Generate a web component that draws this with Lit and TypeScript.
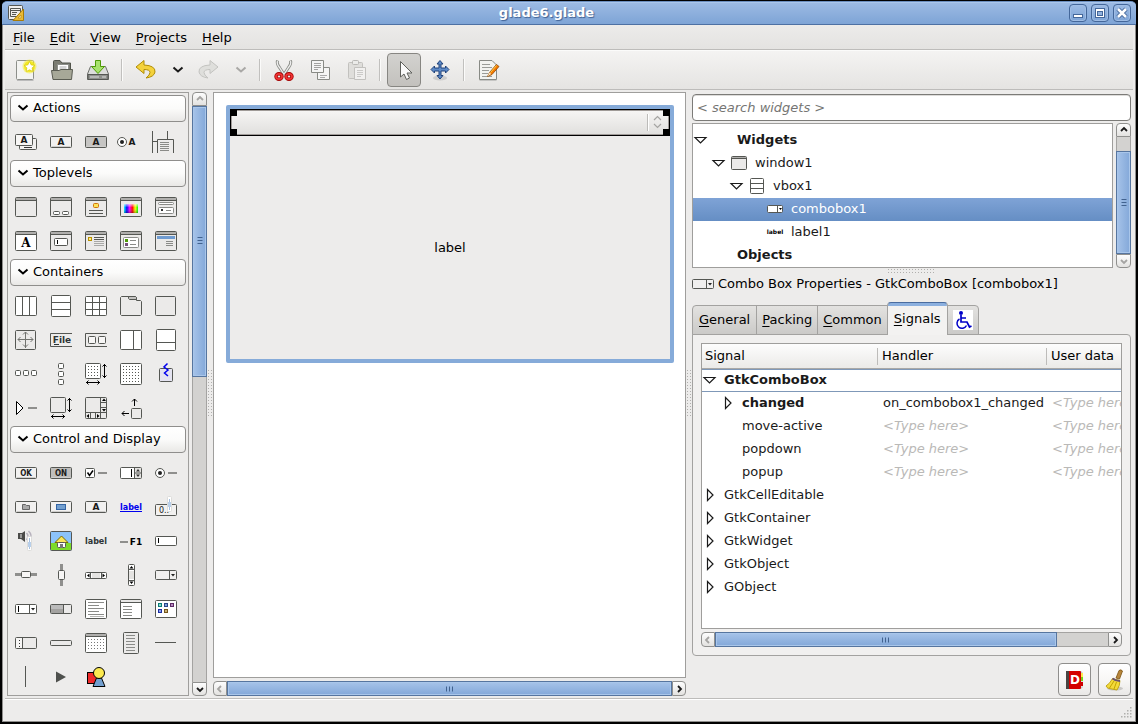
import { LitElement, html, svg, css, nothing } from "lit";
import { customElement, property, state } from "lit/decorators.js";
import { classMap } from "lit/directives/class-map.js";
import { styleMap } from "lit/directives/style-map.js";

/* ---------- drawing helpers for the widget glyphs (22 x 22 grid) ---------- */
const INK = "#555753";
const FACE = "#ebeae9";
const GREY = "#8a8b88";

const box = (x: number, y: number, w: number, h: number, fill = FACE, stroke = INK, rx = 1) =>
  svg`<rect x=${x + 0.5} y=${y + 0.5} width=${w - 1} height=${h - 1} rx=${rx} fill=${fill} stroke=${stroke} />`;
const fillBox = (x: number, y: number, w: number, h: number, fill: string) =>
  svg`<rect x=${x} y=${y} width=${w} height=${h} fill=${fill} />`;
const line = (d: string, stroke = INK, w = 1, fill = "none") =>
  svg`<path d=${d} fill=${fill} stroke=${stroke} stroke-width=${w} />`;
const solid = (d: string, fill = "#000") => svg`<path d=${d} fill=${fill} />`;
const text = (x: number, y: number, size: number, s: string, fill = "#1a1a1a", family = "DejaVu Sans", weight = "bold") =>
  svg`<text x=${x} y=${y} font-size=${size} font-family="${family}, sans-serif" font-weight=${weight} text-anchor="middle" fill=${fill}>${s}</text>`;
const rows = (x1: number, x2: number, ys: number[], c = GREY) =>
  svg`${ys.map((y) => line(`M${x1} ${y + 0.5}H${x2}`, c))}`;
const dots = (x1: number, y1: number, cols: number, lines: number, step: number, c = INK) => {
  let d = "";
  for (let r = 0; r < lines; r++) for (let k = 0; k < cols; k++) d += `M${x1 + k * step} ${y1 + r * step}h1v1h-1z`;
  return solid(d, c);
};
const frame = (fill = FACE, bar = "#b0afad") =>
  svg`${box(0, 1, 22, 20, fill)}${fillBox(1, 2, 20, 2, bar)}${line("M1 4.5H21")}`;
const face = (fill = "#f2f1f0") => svg`${box(0, 5, 22, 12, fill)}${line("M1.5 15.5H20.5", "#cfcecc")}`;
const arrowsWH = svg`${line("M19.5 1V15M17.5 3.5l2-2 2 2M17.5 12.5l2 2 2-2", "#000")}${line("M1 19.5H15M3.5 17.5l-2 2 2 2M12.5 17.5l2 2-2 2", "#000")}`;

const glyphs: Record<string, unknown> = {
  actionGroup: svg`${box(4, 7, 18, 12, "#f2f1f0")}${fillBox(9, 16, 8, 1, "#333")}${box(0, 3, 18, 12, "#f7f6f5")}${text(9, 12, 9, "A")}`,
  action: svg`${face()}${text(11, 14, 9, "A")}`,
  toggleAction: svg`${face("#c6c5c3")}${text(11, 14, 9, "A")}`,
  radioAction: svg`<circle cx="2" cy="11" r="4.500" fill="#fff" stroke=${INK} /><circle cx="2" cy="11" r="2" fill="#222" />${text(12, 14, 9, "A")}`,
  recentAction: svg`${line("M-2.500 0V22M12.500 0V8M-2 10.500H2M2.500 22V8.500H18.500V22")}${rows(5, 14, [11, 13, 15, 17, 19])}`,

  window: frame(),
  dialog: svg`${frame()}${box(3, 15, 7, 4, "#fff")}${box(12, 15, 7, 4, "#fff")}`,
  aboutDialog: svg`${frame()}${box(8, 7, 6, 5, "#fbe35a", "#d1730a")}${rows(4, 18, [14, 17], INK)}`,
  colorDialog: svg`${frame()}${fillBox(4, 8, 14, 9, "url(#hues)")}${fillBox(4, 8, 14, 9, "url(#fade)")}`,
  fileDialog: svg`${frame()}${box(3, 6, 16, 3, "#fff", GREY)}${box(3, 11, 16, 7, "#fff", GREY)}${fillBox(6, 13, 2, 2, "#333")}${line("M11 14.500H16", GREY)}`,
  fontDialog: svg`${frame("#fff")}${text(11, 17, 12, "A", "#000", "DejaVu Serif")}`,
  inputDialog: svg`${frame()}${box(4, 8, 14, 8, "#fff")}${fillBox(7, 10, 1, 4, "#000")}`,
  messageDialog: svg`${frame()}${box(3, 7, 4, 4, "#fbe98a", "#b99200", 0)}${rows(9, 19, [7, 9], INK)}${rows(9, 19, [11, 13, 15], "#a9a9a7")}`,
  recentDialog: svg`${frame()}${box(3, 7, 16, 11, "#fff", GREY)}${fillBox(5, 9, 3, 3, "#4e9a06")}${fillBox(5, 13, 3, 3, "#75507b")}${rows(10, 16, [10, 14])}`,
  assistant: svg`${frame()}${fillBox(2, 6, 18, 3, "#6f9bd0")}${rows(11, 18, [11, 13, 15])}`,

  hbox: svg`${box(0, 1, 22, 20, "#fff")}${line("M7.500 1V21M14.500 1V21")}`,
  vbox: svg`${box(1, 0, 20, 22, "#fff")}${line("M1 7.500H21M1 14.500H21")}`,
  table: svg`${box(0, 1, 22, 20, "#fff")}${line("M7.500 1V21M14.500 1V21M0 7.500H22M0 14.500H22")}`,
  notebook: svg`${line("M.5 19.500V2.500L1.500 1.500H15.500L16.500 2.500V5.500H20.500L21.500 6.500V19.500L20.500 20.500H1.500z", INK, 1, FACE)}${line("M8.500 1.500H15.500L16.500 2.500V4.500H9.500L8.500 3.500z", INK, 1, "#c4c3c1")}`,
  frame: box(0, 1, 21, 20),
  layout: svg`${box(0, 1, 21, 20)}${line("M10.500 3V19M3 10.500H18M8 5.500l2.500-2.500 2.500 2.500M8 15.500l2.500 2.500 2.500-2.500M5.500 8L3 10.500l2.500 2.500M15.500 8l2.500 2.500-2.500 2.500", "#72736f")}`,
  menubar: svg`${line("M22 4.500H.5V17.500H22")}${text(12, 14, 9, "File", "#2e3436")}${line("M4 15.500H9", "#2e3436")}`,
  toolbar: svg`${line("M22 4.500H.5V17.500H22")}${box(3, 7, 8, 8, "#f7f6f5")}${box(13, 7, 8, 8, "#f7f6f5")}`,
  hpaned: svg`${box(0, 1, 22, 20, "#fff")}${line("M13.500 1V21")}`,
  vpaned: svg`${box(1, 0, 20, 22, "#fff")}${line("M1 13.500H21")}`,
  hbuttonbox: svg`${box(0, 7, 6, 6, "#fff")}${box(8, 7, 6, 6, "#fff")}${box(16, 7, 6, 6, "#fff")}`,
  vbuttonbox: svg`${box(8, 0, 6, 6, "#fff")}${box(8, 8, 6, 6, "#fff")}${box(8, 16, 6, 6, "#fff")}`,
  layoutScroll: svg`${box(0, 0, 16, 16, "#fff")}${dots(3, 3, 4, 4, 3)}${arrowsWH}`,
  fixed: svg`${box(0, 0, 22, 22, "#fff")}${dots(3, 3, 6, 6, 3)}`,
  eventbox: svg`${box(4, 5, 14, 14, "#e4e3f0")}${line("M12.500 .5L9 4l4 3-3.500 3 3.500 3", "#0000ee", 1.5)}`,
  expander: svg`${line("M1.500 4.500V17.500L8 11z", "#000", 1, "#fff")}${fillBox(13, 10, 9, 2, "#8f8f8d")}`,
  viewport: svg`${box(0, 0, 16, 16)}${arrowsWH}`,
  scrolled: svg`${box(0, 0, 22, 22)}${line("M15.500 0V22M0 15.500H22M16 5.500H22M16 10.500H22M5.500 16V22M10.500 16V22")}${solid("M17 4h4l-2-2.500zM17 12h4l-2 2.500zM4 17v4l-2.500-2zM12 17v4l2.500-2z")}`,
  alignment: svg`${box(11, 11, 11, 11)}${line("M14.500 9V2M12 4.500l2.500-2.500 2.500 2.500M9 16.500H2M4.500 14L2 16.500l2.500 2.500", "#000")}`,

  button: svg`${face()}${text(11, 14, 8, "OK", "#1a1a1a", "DejaVu Sans Condensed", "bold")}`,
  toggle: svg`${face("#bfbebc")}${text(11, 14, 8, "ON", "#1a1a1a", "DejaVu Sans Condensed", "bold")}`,
  check: svg`${box(0, 6, 10, 10, "#fff")}${line("M2.500 10.500l2 3 3.500-5", "#000", 1.5)}${fillBox(13, 10, 9, 2, "#8f8f8d")}`,
  spin: svg`${box(0, 5, 22, 12, "#fff")}${fillBox(14, 6, 7, 10, "#e4e3e1")}${line("M14.500 5V17M15 11H21")}${line("M11.500 7V15", "#000")}${solid("M16 9.500h4l-2-2.500zM16 12.500h4l-2 2.500z", "#333")}`,
  radio: svg`<circle cx="5" cy="11" r="4.500" fill="#fff" stroke=${INK} /><circle cx="5" cy="11" r="2" fill="#222" />${fillBox(13, 10, 9, 2, "#8f8f8d")}`,
  fileButton: svg`${face()}${line("M7.500 13.500V8.500H10.500L11.500 9.500H14.500V13.500z", "#666", 1, "#aaa")}`,
  colorButton: svg`${face()}${box(6, 8, 10, 6, "#729fcf", "#3465a4", 0)}`,
  fontButton: svg`${face()}${text(11, 14, 9, "A")}`,
  link: svg`${text(11, 14, 8, "label", "#0000ee")}${line("M0 15.500H22", "#0000ee")}`,
  scaleButton: svg`${box(0, 8, 22, 12, "#f2f1f0")}${text(9, 17, 8, "0..", "#1a1a1a", "DejaVu Sans", "normal")}${box(12, 0, 5, 16, "#fff", "#dcdcda")}${line("M14.500 3V14", "#a5c0e2")}${fillBox(13, 6, 3, 5, "#b8cfea")}`,
  volume: svg`${solid("M3 3h4l3-2v11l-4-3H3z", "#4b4b49")}${solid("M5 4h2v4h-2z", "#999")}${line("M11.500 3q3 3 0 7M13.500 1q4.500 4 1 10", "#b7b2bd", 1.5)}${box(12, 6, 5, 15, "#fff", "#dcdcda")}${line("M14.500 8V19", "#a5c0e2")}${fillBox(13, 12, 3, 5, "#b8cfea")}`,
  image: svg`${box(0, 1, 22, 20, "#8cc3fa")}${fillBox(1, 13, 20, 7, "#7ddb2b")}${line("M5 12.500L11.500 6l6.500 6.500z", "#7a6a00", 1, "#fbe65a")}${box(7, 12, 9, 6, "#fff")}${fillBox(10, 14, 3, 4, "#777")}`,
  label: text(11, 14, 8, "label", "#2e3436"),
  accel: svg`${fillBox(0, 11, 8, 2, "#8f8f8d")}${text(16, 15, 9, "F1", "#000")}`,
  entry: svg`${box(0, 6, 22, 10, "#fff")}${fillBox(3, 8, 1, 5, "#000")}`,
  hscale: svg`${fillBox(0, 9, 22, 3, "#8f8f8d")}${box(6, 7, 10, 7, "#f7f6f5")}`,
  vscale: svg`${fillBox(10, 0, 3, 22, "#8f8f8d")}${box(8, 6, 7, 10, "#f7f6f5")}`,
  hscroll: svg`${box(0, 8, 22, 7, "#fff")}${line("M5.500 8V15M16.500 8V15")}${fillBox(7, 9, 8, 5, "#e4e3e1")}${solid("M4.500 9.500v4l-2.500-2zM17.500 9.500v4l2.500-2z")}`,
  vscroll: svg`${box(8, 0, 7, 22, "#fff")}${line("M8 5.500H15M8 16.500H15")}${fillBox(9, 7, 5, 8, "#e4e3e1")}${solid("M9.500 4.500h4l-2-2.500zM9.500 17.500h4l-2 2.500z")}`,
  combo: svg`${box(0, 6, 22, 10, "#f0efee")}${line("M14.500 6V16")}${solid("M16 10h4l-2 2.500z", "#222")}`,
  comboEntry: svg`${box(0, 6, 22, 10, "#fff")}${line("M14.500 6V16")}${fillBox(3, 8, 1, 6, "#000")}${solid("M16 10h4l-2 2.500z", "#222")}`,
  progress: svg`${box(0, 6, 22, 10)}${fillBox(1, 7, 12, 8, "#a3a2a0")}${fillBox(1, 7, 12, 4, "#bbb")}${line("M13.500 6V16")}`,
  textview: svg`${box(0, 1, 22, 20, "#fff")}${rows(3, 19, [4, 10, 16])}${rows(3, 14, [7, 13])}${rows(5, 19, [18], "#b5b5b3")}`,
  treeview: svg`${frame("#fff", "#e8e7e6")}${rows(3, 12, [8, 11, 14, 17])}`,
  iconview: svg`${box(0, 2, 22, 18, "#fff")}${box(3, 5, 4, 4, "#8fd6cf", "#0b7d74", 0)}${box(9, 5, 4, 4, "#7aa0dd", "#2a4585", 0)}${box(15, 5, 4, 4, "#b98ac0", "#5c2a66", 0)}${box(3, 11, 4, 4, "#8c9ff0", "#1c2ea0", 0)}${box(9, 11, 4, 4, "#c9b078", "#75561a", 0)}`,
  handlebox: svg`${box(0, 5, 22, 12)}${fillBox(1, 6, 6, 10, "#f7f6f5")}${line("M7.500 5V17")}${dots(4, 8, 1, 3, 3, "#333")}`,
  statusbar: box(0, 8, 22, 6),
  calendar: svg`${frame("#fff")}${dots(3, 7, 6, 4, 3, "#777")}`,
  list: svg`${box(3, 0, 16, 22, FACE)}${rows(6, 15, [3, 6, 9, 12, 15, 18])}`,
  hsep: line("M0 10.500H21"),
  vsep: line("M10.500 0V21"),
  arrow: solid("M6 5.500V16.500L16 11z", "#4e504d"),
  drawing: svg`${box(2, 6, 12, 12, "#ef2929", "#000", 0)}${line("M11.500 12h5l3.500 8.500h-12z", "#000", 1, "#729fcf")}<circle cx="14" cy="7" r="5.500" fill="#fce94f" stroke="#000" />`,
};

const palette = [
  { title: "Actions", items: ["actionGroup", "action", "toggleAction", "radioAction", "recentAction"] },
  {
    title: "Toplevels",
    items: ["window", "dialog", "aboutDialog", "colorDialog", "fileDialog", "fontDialog", "inputDialog", "messageDialog", "recentDialog", "assistant"],
  },
  {
    title: "Containers",
    items: [
      "hbox", "vbox", "table", "notebook", "frame",
      "layout", "menubar", "toolbar", "hpaned", "vpaned",
      "hbuttonbox", "vbuttonbox", "layoutScroll", "fixed", "eventbox",
      "expander", "viewport", "scrolled", "alignment",
    ],
  },
  {
    title: "Control and Display",
    items: [
      "button", "toggle", "check", "spin", "radio",
      "fileButton", "colorButton", "fontButton", "link", "scaleButton",
      "volume", "image", "label", "accel", "entry",
      "hscale", "vscale", "hscroll", "vscroll", "combo",
      "comboEntry", "progress", "textview", "treeview", "iconview",
      "handlebox", "statusbar", "calendar", "list", "hsep",
      "vsep", "arrow", "drawing",
    ],
  },
];

const gradients = svg`<defs>
  <linearGradient id="hues"><stop offset="0" stop-color="#0ff"/><stop offset=".2" stop-color="#00f"/><stop offset=".4" stop-color="#f0f"/><stop offset=".6" stop-color="#f00"/><stop offset=".8" stop-color="#ff0"/><stop offset="1" stop-color="#0f0"/></linearGradient>
  <linearGradient id="fade" x2="0" y2="1"><stop offset="0" stop-color="#fff" stop-opacity=".7"/><stop offset=".4" stop-color="#fff" stop-opacity="0"/><stop offset="1" stop-color="#000" stop-opacity=".3"/></linearGradient>
</defs>`;

const glyph = (name: string) => html`<svg width="22" height="22" viewBox="0 0 22 22" aria-hidden="true">
  ${name === "colorDialog" ? gradients : nothing}${glyphs[name]}
</svg>`;

/* ---------- toolbar pictures (24 x 24 grid) ---------- */
const redoShape = "M15 3.500l8 6.500-8 6.500v-4q-6 0-6 3 0 2.500 4 5.500-8-1-9-6-.5-6.500 11-7z";
const tools: Record<string, unknown> = {
  new: svg`<rect x="2.500" y="2.500" width="17" height="19" rx="1" fill="#f4f4f2" stroke="#8d8f8a"/><path d="M3 22.500H19.500" stroke="#bbb"/><circle cx="15.500" cy="8.500" r="7" fill="#f5ee31" opacity=".55"/><circle cx="15.500" cy="8.500" r="5.500" fill="#f1e611" opacity=".8"/><path d="M15.500 3.500l1.700 3.400 3.600.5-2.700 2.500.7 3.600-3.300-1.700-3.300 1.700.7-3.600-2.700-2.500 3.600-.5z" fill="#fff" stroke="#d9c800" stroke-width=".7"/>`,
  open: svg`<path d="M3.500 20.500V3.500q0-1 1-1H10l2 2.500h8.500V16" fill="#7b7c72" stroke="#50524a"/><path d="M7.500 17V6.500H18.500V17z" fill="#fff" stroke="#8d8f8a"/><path d="M9.500 9H16.500M9.500 11H16.500" stroke="#aaa"/><path d="M1.500 12.500H9l2-1H22.500L21.500 21.500H3z" fill="#a7a898" stroke="#5a5c52"/>`,
  save: svg`<path d="M4.500 8.500H19.500L22.500 16V21.500H1.500V16z" fill="#dcdddb" stroke="#6b6d69"/><path d="M2 16.500H22V21.500H2z" fill="#8f918d" stroke="#555753"/><path d="M4 19H13M16 19H20" stroke="#dedede"/><path d="M9.500 2.500h5v6h4L12 15.500 5.500 8.500h4z" fill="#a7e26c" stroke="#4e9a06"/>`,
  undo: svg`<path d="${redoShape}" transform="matrix(-1 0 0 1 25 -1)" fill="#f4d23c" stroke="#b08d05"/>`,
  redo: svg`<path d="${redoShape}" transform="translate(-2 -1)" fill="#dfdfdc" stroke="#c3c3c0"/>`,
  cut: svg`<path d="M5.500 2.500q-1 3 2 7l4.500 7M18.500 2.500q1 3-2 7l-4.500 7" fill="none" stroke="#888a85" stroke-width="3"/><path d="M5.500 3q-1 3 2 6.500l4.500 7M18.500 3q1 3-2 6.500l-4.500 7" fill="none" stroke="#eee" stroke-width="1.300"/><ellipse cx="7" cy="18.500" rx="3" ry="2.700" fill="none" stroke="#a40000" stroke-width="3.400"/><ellipse cx="17" cy="18.500" rx="3" ry="2.700" fill="none" stroke="#a40000" stroke-width="3.400"/><ellipse cx="7" cy="18.500" rx="3" ry="2.700" fill="none" stroke="#e33" stroke-width="1.800"/><ellipse cx="17" cy="18.500" rx="3" ry="2.700" fill="none" stroke="#e33" stroke-width="1.800"/>`,
  copy: svg`<path d="M9.500 9.500H21.500V21.500H9.500z" fill="#f5f5f4" stroke="#888a85"/><path d="M12 17.500H19M12 19.500H17" stroke="#aaa"/><path d="M3.500 2.500H15.500V14.500H3.500z" fill="#f5f5f4" stroke="#888a85"/><path d="M6 5.500H13M6 7.500H13M6 9.500H13M6 11.500H10" stroke="#a2a2a0"/>`,
  paste: svg`<rect x="4.500" y="4.500" width="14" height="16" rx="1" fill="#dfdedb" stroke="#c2c1be"/><rect x="8.500" y="2.500" width="6" height="4" rx="1" fill="#ebebe9" stroke="#b9b8b5"/><path d="M10.500 9.500H21.500V21.500H10.500z" fill="#f1f0ef" stroke="#c2c1be"/><path d="M13 12.500H19M13 14.500H19M13 16.500H19M13 18.500H17" stroke="#cbcac8"/>`,
  pointer: svg`<path d="M8.500 3.500V19l3.500-3 2.500 5.500 3-1.500L15 15h5z" fill="#fafafa" stroke="#5f605c"/>`,
  move: svg`<ellipse cx="12" cy="20" rx="7" ry="2.500" fill="#bbb" opacity=".6"/><path d="M12 2.500l3 3.500h-2v4h4.500V8l3.500 3.500-3.500 3.500v-2H13v4.500h2l-3 3.500-3-3.500h2V13H6.500v2L3 11.500 6.500 8v2H11V6H9z" fill="#5d8ac7" stroke="#20437c"/>`,
  edit: svg`<path d="M3.500 2.500H16L20.500 7V21.500H3.500z" fill="#f2f3f0" stroke="#888a85"/><path d="M3.500 22.500H20.500" stroke="#c5c5c3"/><path d="M6 6.500H14M6 9.500H16M6 12.500H13M6 15.500H12M6 18.500H16" stroke="#9a9c98"/><path d="M11.500 18.500l2-4 7-8 2.500 2-7 8z" fill="#f57900" stroke="#8f4700" stroke-width=".8"/><path d="M11.500 18.500l2-4 1.700 1.500z" fill="#f7e3c1"/><path d="M14.500 14.500l6-7" stroke="#fcd34f"/>`,
};
const tool = (name: string) => html`<svg width="24" height="24" viewBox="0 0 24 24" aria-hidden="true">${tools[name]}</svg>`;
const chevron = html`<svg width="12" height="8" viewBox="0 0 12 8" aria-hidden="true"><path d="M1.500 1.500L6 5.500l4.500-4" fill="none" stroke="currentColor" stroke-width="2" /></svg>`;
const triDown = html`<svg width="12" height="12" viewBox="0 0 12 12" aria-hidden="true"><path d="M0 3.500H11L5.500 9z" fill="#fff" stroke="#1a1a1a" stroke-width="1.200" /></svg>`;
const triRight = html`<svg width="12" height="12" viewBox="0 0 12 12" aria-hidden="true"><path d="M3.500 .5V11.500L9 6z" fill="#fff" stroke="#1a1a1a" stroke-width="1.200" /></svg>`;

const mnemonic = (word: string) => html`<u>${word[0]}</u>${word.slice(1)}`;

/* ---------- scrollbar ---------- */
@customElement("scroll-bar")
export class ScrollBar extends LitElement {
  @property({ type: Boolean, reflect: true }) vertical = false;
  @property({ type: Number }) before = 0;
  @property({ type: Number }) size = 100;
  @property({ type: Boolean }) atStart = false;
  @property({ type: Boolean }) atEnd = false;

  static styles = css`
    :host { display: flex; height: 15px; }
    :host([vertical]) { flex-direction: column; width: 15px; height: auto; }
    .step {
      display: grid; place-items: center; box-sizing: border-box; flex: none;
      width: 14px; height: 15px; padding: 0; color: #1a1a1a;
      border: 1px solid #90908e; background: linear-gradient(#fdfdfd, #e3e2e0);
    }
    :host([vertical]) .step { width: 15px; height: 14px; }
    .step:disabled { color: #a5a4a2; }
    .first { border-radius: 4px 0 0 4px; }
    .last { border-radius: 0 4px 4px 0; }
    :host([vertical]) .first { border-radius: 4px 4px 0 0; }
    :host([vertical]) .last { border-radius: 0 0 4px 4px; }
    .trough {
      display: flex; flex: 1; min-width: 0; min-height: 0; background: #d3d2d0;
      border: solid #a4a3a1; border-width: 1px 0;
    }
    :host([vertical]) .trough { flex-direction: column; border-width: 0 1px; }
    .thumb {
      display: grid; place-items: center; box-sizing: border-box; margin: -1px 0;
      border: 1px solid #56759f; background: linear-gradient(#a6c3e9, #83a8d9);
      box-shadow: inset 0 0 0 1px #a9c6ea;
    }
    :host([vertical]) .thumb { margin: 0 -1px; background: linear-gradient(90deg, #a6c3e9, #83a8d9); }
    .turned { transform: rotate(90deg); }
  `;

  render() {
    const dir = this.vertical ? "height" : "width";
    const paths = this.vertical ? ["M2 6l3-3 3 3", "M2 4l3 3 3-3"] : ["M6 2L3 5l3 3", "M4 2l3 3-3 3"];
    const icon = (d: string) => html`<svg width="10" height="10" viewBox="0 0 10 10" aria-hidden="true"><path d=${d} fill="none" stroke="currentColor" stroke-width="1.800" /></svg>`;
    return html`
      <button class="step first" aria-label="Scroll back" ?disabled=${this.atStart}>${icon(paths[0])}</button>
      <div class="trough">
        <div style=${styleMap({ [dir]: `${this.before}%` })}></div>
        <div class="thumb" style=${styleMap({ [dir]: `${this.size}%` })}>
          <svg class=${this.vertical ? "turned" : ""} width="8" height="8" viewBox="0 0 8 8" aria-hidden="true"><path d="M.5 1.500V6.500M3.500 1.500V6.500M6.500 1.500V6.500" stroke="#41628f" /></svg>
        </div>
      </div>
      <button class="step last" aria-label="Scroll forward" ?disabled=${this.atEnd}>${icon(paths[1])}</button>
    `;
  }
}

interface SignalRow {
  name: string;
  kind: "open" | "child" | "group" | "leaf";
  handler?: string;
}

const signalRows: SignalRow[] = [
  { name: "GtkComboBox", kind: "open" },
  { name: "changed", kind: "child", handler: "on_combobox1_changed" },
  { name: "move-active", kind: "leaf" },
  { name: "popdown", kind: "leaf" },
  { name: "popup", kind: "leaf" },
  { name: "GtkCellEditable", kind: "group" },
  { name: "GtkContainer", kind: "group" },
  { name: "GtkWidget", kind: "group" },
  { name: "GtkObject", kind: "group" },
  { name: "GObject", kind: "group" },
];

@customElement("app-root")
export class AppRoot extends LitElement {
  @state() private tab = "Signals";

  static styles = css`
    :host {
      display: flex; flex-direction: column; box-sizing: border-box; height: 100vh;
      padding: 1px 2px 2px 2px; background: #000; color: #1a1a1a;
      font: 13px/16px "DejaVu Sans", sans-serif;
    }
    *, *::before, *::after { box-sizing: border-box; }
    button, input, select { font: inherit; color: inherit; }
    button { margin: 0; padding: 0; border: 0; background: none; }
    svg { display: block; flex: none; overflow: visible; }
    u { text-underline-offset: 2px; }

    .titlebar {
      display: flex; align-items: center; height: 24px; flex: none; padding: 0 5px 0 6px;
      border-top: 1px solid #6b8fc0; border-bottom: 1px solid #4d70a3; border-radius: 5px 5px 0 0;
      background: linear-gradient(#9dbbe4, #7ea4d6);
      box-shadow: inset 0 1px #aac6eb;
    }
    .title {
      flex: 1; margin: 0; text-align: center; font-size: 13px; font-weight: bold; color: #fff;
      text-shadow: 1px 1px 1px #3f6193;
    }
    .winbuttons { display: flex; gap: 4px; }
    .winbutton {
      display: grid; place-items: center; width: 18px; height: 18px; border-radius: 4px;
      border: 1px solid #44679a; background: linear-gradient(#9dbbe4, #7ea4d6); box-shadow: inset 0 0 0 1px #9fbde5;
    }

    .window {
      display: flex; flex-direction: column; flex: 1; min-height: 0;
      border: solid #8f8e8c; border-width: 0 1px 1px 1px; background: #edeceb; padding: 0 2px;
    }
    .menubar {
      display: flex; flex: none; gap: 1px; height: 25px; padding: 0 1px; align-items: center;
      border-bottom: 1px solid #bdbcba; background: linear-gradient(#ecebea, #e4e3e1);
    }
    .menu { padding: 2px 7px 0; line-height: 22px; color: #000; }
    .toolbar {
      display: flex; flex: none; height: 40px; align-items: center; padding: 0 3px;
      border-top: 1px solid #fbfbfa; border-bottom: 1px solid #bdbcba; background: linear-gradient(#f4f3f2, #e5e4e2);
    }
    .tool { display: grid; place-items: center; width: 36px; height: 36px; }
    .tool.more { width: 27px; }
    .tool:disabled { color: #a9a8a6; }
    .tool.active {
      width: 34px; height: 34px; margin: 0 1px; border: 1px solid #878682; border-radius: 4px;
      background: linear-gradient(#d3d2cf, #c3c1bd);
    }
    .toolsep { width: 2px; height: 22px; margin: 0 5px; background: #c1c0be; border-right: 1px solid #fbfbfa; }

    .main { display: flex; flex: 1; min-height: 0; padding: 2px; }
    .well { border: 1px solid #9f9e9c; }
    .palettepane { display: flex; gap: 3px; flex: none; }
    .palette { width: 182px; padding: 2px 2px 0; overflow: hidden; }
    .header {
      display: flex; align-items: center; gap: 4px; width: 100%; height: 27px; padding: 0 6px 1px;
      border: 1px solid #8f8e8c; border-radius: 4px; color: #000;
      background: linear-gradient(#ffffff, #fbfbfa 50%, #e9e8e6);
    }
    .header:not(:first-child) { margin-top: 1px; }
    .grid { display: grid; grid-template-columns: repeat(5, 35px); margin: 3px 0 0 -2px; }
    .item { width: 35px; height: 34px; padding: 6px 6px 6px 7px; }

    .grip { display: grid; place-items: center; flex: none; width: 6px; }
    .grip::before {
      content: ""; width: 5px; height: 48px;
      background: conic-gradient(from 270deg at 1px 1px, #b0afad 90deg, transparent 0) 0 0 / 3px 3px;
    }
    .grip.flat { width: auto; height: 5px; }
    .grip.flat::before { width: 48px; height: 4px; }

    .design { display: flex; flex-direction: column; gap: 3px; flex: 1; min-width: 0; }
    .canvas { flex: 1; min-height: 0; padding: 12px 11px 12px 12px; background: #fff; }
    .preview {
      display: flex; flex-direction: column; height: 258px; border: 4px solid #86abd9; border-radius: 2px; background: #edeceb;
    }
    .selected { position: relative; height: 27px; border: 1px solid #000; }
    .combo {
      display: block; appearance: none; width: 100%; height: 25px; margin: 0; padding: 0 28px 0 4px;
      border: 1px solid #a09b98; border-radius: 3px; background: linear-gradient(#f6f5f4, #e1e0de); color: #1a1a1a;
    }
    .updown { position: absolute; right: 4px; top: 3px; pointer-events: none; }
    .handle { position: absolute; width: 7px; height: 7px; background: #000; }
    .handle.nw { left: -1px; top: -1px; }
    .handle.ne { right: -1px; top: -1px; }
    .handle.sw { left: -1px; bottom: -1px; }
    .handle.se { right: -1px; bottom: -1px; }
    .placeholder { display: grid; place-items: center; flex: 1; color: #000; }

    .inspector { display: flex; flex-direction: column; flex: 0 0 439px; min-width: 0; padding-top: 2px; }
    .search {
      flex: none; width: 100%; height: 27px; padding: 0 4px; margin-bottom: 2px; border: 1px solid #7c7b78; border-radius: 4px;
      background: #fff; box-shadow: inset 0 1px #dddcda;
    }
    .search::placeholder { font-style: italic; color: #757573; opacity: 1; }
    .treepane { display: flex; gap: 3px; flex: none; height: 145px; }
    .tree { flex: 1; min-width: 0; margin: 0; padding: 5px 0 0; overflow: hidden; background: #fff; list-style: none; }
    .node { display: flex; align-items: center; height: 23px; padding: 0 0 1px 2px; gap: 6px; }
    .node.d1 { padding-left: 20px; }
    .node.d2 { padding-left: 38px; }
    .node.d3 { padding-left: 56px; }
    .node.picked { color: #fff; background: linear-gradient(#7fa3d6, #658ec4); }
    .slot { display: grid; place-items: center; flex: none; width: 12px; }
    .pic { display: grid; place-items: center; flex: none; width: 16px; margin-right: 2px; }
    .strong { font-weight: bold; }

    .subject { display: flex; align-items: center; gap: 4px; flex: none; height: 22px; margin: 0; font-size: 13px; font-weight: normal; color: #000; }
    .tabs { display: flex; align-items: flex-end; flex: none; height: 40px; margin-bottom: -1px; position: relative; }
    .tab {
      height: 30px; padding: 0 5px; margin-right: -1px; border: 1px solid #a3a2a0; color: #000;
      background: linear-gradient(#e3e2e0, #cbcac8);
    }
    .tab:first-child { padding: 0 6px; border-top-left-radius: 4px; }
    .tab:last-child { border-top-right-radius: 4px; }
    .tab.on {
      height: 33px; padding: 0 6px; border-bottom: 0; border-top-color: #4a6c9f;
      border-radius: 4px 4px 0 0; background: #f3f2f1 linear-gradient(#8cb0df, #8cb0df) top / 100% 3px no-repeat;
    }
    .page {
      display: flex; flex-direction: column; gap: 3px; flex: 1; min-height: 0; padding: 8px;
      border: 1px solid #a3a2a0; border-radius: 0 4px 4px 4px; background: #f1f0ef;
    }
    .signals { flex: 1; min-height: 0; overflow: hidden; background: #fff; }
    table { width: 484px; table-layout: fixed; border-collapse: separate; border-spacing: 0; }
    th {
      height: 25px; padding: 0 5px; text-align: left; font-weight: normal; color: #000;
      background: linear-gradient(#fdfdfd, #ebeae8); border-bottom: 1px solid #a9a8a6;
    }
    th:first-child { padding-left: 3px; }
    th + th { background: linear-gradient(#bdbcba, #bdbcba) 0 4px / 1px 17px no-repeat, linear-gradient(#fdfdfd, #ebeae8); }
    td { height: 23px; padding: 0 6px 1px; white-space: nowrap; overflow: hidden; }
    td:first-child { padding-left: 2px; }
    .c1 { width: 175px; }
    .c2 { width: 169px; }
    .cell { display: flex; align-items: center; gap: 8px; }
    .cell.inner { padding-left: 18px; }
    .focused td { border-top: 1px solid #7f98b8; border-bottom: 1px solid #7f98b8; }
    .hint { font-style: italic; color: #bab9b7; }
    .actions { display: flex; justify-content: flex-end; gap: 7px; flex: none; padding: 7px 0 0; }
    .action {
      display: grid; place-items: center; width: 33px; height: 33px; border: 1px solid #8f8e8c; border-radius: 4px;
      background: linear-gradient(#ffffff, #f8f7f6 50%, #e9e8e6);
    }
    .status { display: flex; justify-content: flex-end; flex: none; height: 23px; padding: 8px 0 0; border-top: 1px solid #bdbcba; box-shadow: inset 0 1px #fff; }
  `;

  private renderTitlebar() {
    return html`
      <header class="titlebar">
        <svg width="16" height="16" viewBox="0 0 16 16" aria-hidden="true">
          <rect x=".5" y=".5" width="14" height="14" rx="1" fill="#f0efed" stroke="#555753" />
          <path d="M2.500 3.500H12.500V11.500H2.500zM2 5.500H13M4 7.500H9M4 9.500H8" fill="none" stroke="#555753" />
          <path d="M15.500 4V15.500H5z" fill="#e9b935" stroke="#a97b06" /><path d="M13 10V13H10z" fill="#f6e6a8" stroke="#a97b06" stroke-width=".5" />
        </svg>
        <h1 class="title">glade6.glade</h1>
        <div class="winbuttons">
          <button class="winbutton" aria-label="Minimize"><svg width="12" height="12" viewBox="0 0 12 12"><rect x="1.500" y="7.500" width="9" height="3" fill="#fff" stroke="#44679a" /></svg></button>
          <button class="winbutton" aria-label="Maximize"><svg width="12" height="12" viewBox="0 0 12 12"><rect x="1.500" y="1.500" width="9" height="9" fill="#fff" stroke="#44679a" /><rect x="3.500" y="4.500" width="5" height="4" fill="#8fb1de" stroke="#44679a" /></svg></button>
          <button class="winbutton" aria-label="Close"><svg width="12" height="12" viewBox="0 0 12 12"><path d="M2 2l8 8M10 2l-8 8" stroke="#44679a" stroke-width="4.500" /><path d="M2 2l8 8M10 2l-8 8" stroke="#fff" stroke-width="2.500" /></svg></button>
        </div>
      </header>
    `;
  }

  private renderToolbar() {
    const item = (name: string, extra = {}, disabled = false) =>
      html`<button class=${classMap({ tool: true, ...extra })} aria-label=${name} ?disabled=${disabled}>${tool(name)}</button>`;
    const sep = html`<div class="toolsep"></div>`;
    return html`
      <div class="toolbar" role="toolbar">
        ${item("new")}${item("open")}${item("save")}${sep}
        ${item("undo")}<button class="tool more" aria-label="Undo history">${chevron}</button>
        ${item("redo", {}, true)}<button class="tool more" aria-label="Redo history" disabled>${chevron}</button>${sep}
        ${item("cut")}${item("copy")}${item("paste", {}, true)}${sep}
        ${item("pointer", { active: true })}${item("move")}${sep}${item("edit")}
      </div>
    `;
  }

  private renderPalette() {
    return html`
      <section class="palettepane">
        <div class="palette well">
          ${palette.map(
            (group) => html`
              <button class="header" aria-expanded="true">${chevron}${group.title}</button>
              <div class="grid">
                ${group.items.map((name) => html`<button class="item" aria-label=${name}>${glyph(name)}</button>`)}
              </div>
            `,
          )}
        </div>
        <scroll-bar vertical atStart .size=${47}></scroll-bar>
      </section>
    `;
  }

  private renderDesign() {
    return html`
      <section class="design">
        <div class="canvas well">
          <div class="preview">
            <div class="selected">
              <select class="combo" aria-label="combobox1"><option></option></select>
              <svg class="updown" width="18" height="19" viewBox="0 0 18 19" aria-hidden="true">
                <path d="M.5 1V18" stroke="#bcbbb9" /><path d="M1.500 1V18" stroke="#fff" />
                <path d="M7 7l3.500-3.500L14 7M7 11l3.500 3.500L14 11" fill="none" stroke="#a5a4a2" stroke-width="1.200" />
              </svg>
              ${["nw", "ne", "sw", "se"].map((c) => html`<div class="handle ${c}"></div>`)}
            </div>
            <div class="placeholder">label</div>
          </div>
        </div>
        <scroll-bar atStart .size=${100}></scroll-bar>
      </section>
    `;
  }

  private renderTree() {
    const small = (body: unknown) => html`<svg width="16" height="16" viewBox="0 0 16 16" aria-hidden="true">${body}</svg>`;
    return html`
      <div class="treepane">
        <ul class="tree well">
          <li class="node"><span class="slot">${triDown}</span><span class="pic"></span><span class="strong">Widgets</span></li>
          <li class="node d1"><span class="slot">${triDown}</span>
            <span class="pic">${small(svg`${box(0, 1, 16, 14)}${fillBox(1, 2, 14, 1, "#b0afad")}${line("M1 3.500H15")}`)}</span><span>window1</span></li>
          <li class="node d2"><span class="slot">${triDown}</span>
            <span class="pic">${small(svg`${box(1, 0, 14, 16, "#fff")}${line("M1 5.500H15M1 10.500H15")}`)}</span><span>vbox1</span></li>
          <li class="node d3 picked"><span class="slot"></span>
            <span class="pic">${small(svg`${box(0, 4, 16, 8, "#fff")}${line("M10.500 4V12")}${solid("M12 7h3l-1.500 2z")}`)}</span><span>combobox1</span></li>
          <li class="node d3"><span class="slot"></span>
            <span class="pic">${small(text(8, 10, 6, "label", "#000"))}</span><span>label1</span></li>
          <li class="node"><span class="slot"></span><span class="pic"></span><span class="strong">Objects</span></li>
        </ul>
        <scroll-bar vertical atEnd .before=${12} .size=${88}></scroll-bar>
      </div>
    `;
  }

  private renderSignals() {
    const hint = html`<span class="hint">&lt;Type here&gt;</span>`;
    return html`
      <div class="page" role="tabpanel">
        <div class="signals well">
          <table>
            <thead><tr><th class="c1">Signal</th><th class="c2">Handler</th><th>User data</th></tr></thead>
            <tbody>
              ${signalRows.map((row) => {
                const inner = row.kind === "child" || row.kind === "leaf";
                const icon = row.kind === "open" ? triDown : row.kind === "leaf" ? nothing : triRight;
                return html`
                  <tr class=${classMap({ focused: row.kind === "open" })}>
                    <td>
                      <div class=${classMap({ cell: true, inner, strong: row.kind === "open" || row.kind === "child" })}>
                        <span class="slot">${icon}</span><span>${row.name}</span>
                      </div>
                    </td>
                    <td>${inner ? row.handler ?? hint : nothing}</td>
                    <td>${inner ? hint : nothing}</td>
                  </tr>
                `;
              })}
            </tbody>
          </table>
        </div>
        <scroll-bar atStart .size=${87}></scroll-bar>
      </div>
    `;
  }

  private renderInspector() {
    return html`
      <section class="inspector">
        <input class="search" type="text" aria-label="search widgets" placeholder="&lt; search widgets &gt;" />
        ${this.renderTree()}
        <div class="grip flat"></div>
        <h2 class="subject">
          <svg width="22" height="22" viewBox="0 0 22 22" aria-hidden="true">${glyphs.combo}</svg>
          Combo Box Properties - GtkComboBox [combobox1]
        </h2>
        <div class="tabs" role="tablist">
          ${["General", "Packing", "Common", "Signals"].map(
            (name) => html`<button class=${classMap({ tab: true, on: name === this.tab })} role="tab"
              aria-selected=${name === this.tab} @click=${() => (this.tab = name)}>${mnemonic(name)}</button>`,
          )}
          <button class="tab" role="tab" aria-label="Accessibility">
            <svg width="20" height="20" viewBox="0 0 20 20" aria-hidden="true">
              <rect width="20" height="20" fill="#fff" /><circle cx="8" cy="3" r="2" fill="#0000c8" />
              <path d="M8 5v7h6l2.500 5 2-1M8 8h5" fill="none" stroke="#0000c8" stroke-width="1.700" />
              <path d="M6.500 9a5 5 0 1 0 7 6.500" fill="none" stroke="#0000c8" stroke-width="1.500" />
            </svg>
          </button>
        </div>
        ${this.renderSignals()}
        <div class="actions">
          <button class="action" aria-label="Documentation">
            <svg width="20" height="20" viewBox="0 0 20 20" aria-hidden="true">
              <path d="M15 2h2v16h-2z" fill="#f2f2f2" stroke="#999" stroke-width=".5" /><path d="M16 3h2v4h-2z" fill="#fce94f" /><path d="M16 7h2v4h-2z" fill="#73d216" /><path d="M16 12h2v4h-2z" fill="#cc0000" />
              <rect x="1" y="1" width="15" height="18" rx="1" fill="#d40000" /><rect x="1" y="1" width="3" height="18" fill="#4a4643" />
              <text x="10" y="14" font-size="12" font-weight="bold" font-family="DejaVu Sans, sans-serif" text-anchor="middle" fill="#fff">D</text>
            </svg>
          </button>
          <button class="action" aria-label="Clear">
            <svg width="22" height="22" viewBox="0 0 22 22" aria-hidden="true">
              <ellipse cx="11" cy="19.500" rx="8" ry="2" fill="#c9c8c6" />
              <path d="M12 9l3-7.500q2-1.500 3.500 .5L15.500 10z" fill="#b8863b" stroke="#7a5212" stroke-width=".8" />
              <path d="M8.500 9.500q-2.500 5-6.500 7.500 1 2 3 2.500l8 1.500q3-4 3-9.500z" fill="#f3da3a" stroke="#b39500" stroke-width=".8" />
              <path d="M10 12l-4.500 7M12.500 13l-2.500 7" stroke="#c4a300" /><path d="M8.500 9.500q3 2.500 7.500 2.500" fill="none" stroke="#6b5170" stroke-width="2" />
            </svg>
          </button>
        </div>
      </section>
    `;
  }

  render() {
    return html`
      ${this.renderTitlebar()}
      <div class="window">
        <nav class="menubar">
          ${["File", "Edit", "View", "Projects", "Help"].map((m) => html`<button class="menu">${mnemonic(m)}</button>`)}
        </nav>
        ${this.renderToolbar()}
        <main class="main">
          ${this.renderPalette()}
          <div class="grip"></div>
          ${this.renderDesign()}
          <div class="grip"></div>
          ${this.renderInspector()}
        </main>
        <footer class="status">
          <svg width="12" height="12" viewBox="0 0 12 12" aria-hidden="true">
            ${solid("M9 0h1.500v1.500h-1.500zM6 3h1.500v1.500h-1.500zM9 3h1.500v1.500h-1.500zM3 6h1.500v1.500h-1.500zM6 6h1.500v1.500h-1.500zM9 6h1.500v1.500h-1.500zM0 9h1.500v1.500h-1.500zM3 9h1.500v1.500h-1.500zM6 9h1.500v1.500h-1.500zM9 9h1.500v1.500h-1.500z", "#b0afad")}
          </svg>
        </footer>
      </div>
    `;
  }
}
